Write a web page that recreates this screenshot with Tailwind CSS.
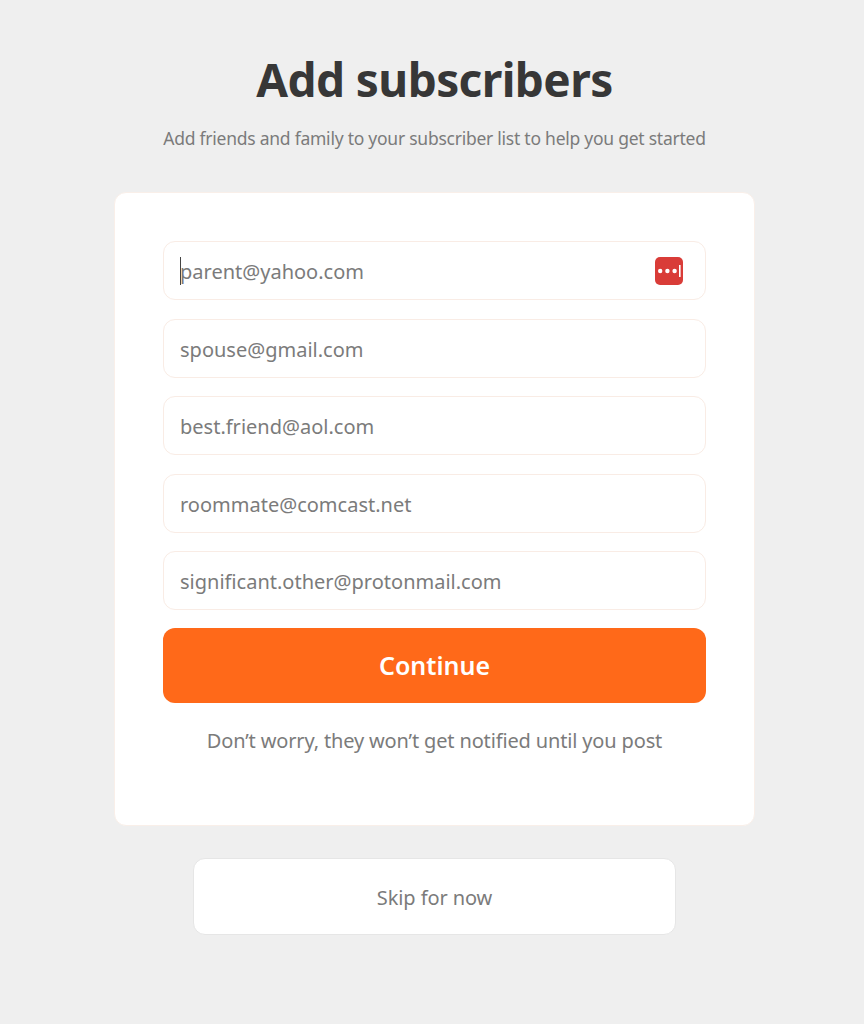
<!DOCTYPE html>
<html lang="en">
<head>
    <meta charset="UTF-8">
    <meta name="viewport" content="width=device-width, initial-scale=1.0">
    <title>Add subscribers</title>
    <script src="https://cdn.jsdelivr.net/npm/@tailwindcss/browser@4"></script>
</head>
<body class="bg-[#efefef] min-h-screen font-['Noto_Sans',sans-serif] text-[#7b7b7b]">
    <main class="w-[641px] ml-[114px] pt-[48px] flex flex-col items-center">
        <h1 class="text-[46px] leading-[62px] font-bold text-[#373737] tracking-[-0.6px]">Add subscribers</h1>
        <p class="mt-[16px] text-[17.5px] leading-[24px] tracking-[-0.25px] whitespace-nowrap">Add friends and family to your subscriber list to help you get started</p>

        <div class="mt-[42px] w-full h-[634px] bg-white rounded-[12px] border border-[#f9efe9] px-[48px] pt-[48px]">
            <form class="flex flex-col gap-[18.5px]">
                <div class="relative">
                    <input type="text" placeholder="parent@yahoo.com" class="w-full h-[59px] px-[16px] pt-[2px] bg-white rounded-[12px] border border-[#f9ece5] text-[20px] placeholder:text-[#7b7b7b] outline-none">
                    <span class="absolute left-[17px] top-[16px] w-px h-[28px] bg-[#444]"></span>
                    <svg class="absolute left-[491.5px] top-[16px] w-[28px] h-[28px]" viewBox="0 0 28 28">
                        <rect width="28" height="28" rx="5" fill="#d93c38"/>
                        <circle cx="5.2" cy="14" r="2.2" fill="#fff"/>
                        <circle cx="12.4" cy="14" r="2.2" fill="#fff"/>
                        <circle cx="19.6" cy="14" r="2.2" fill="#fff"/>
                        <rect x="24" y="8" width="1.6" height="12" fill="#fff"/>
                    </svg>
                </div>
                <input type="text" placeholder="spouse@gmail.com" class="w-full h-[59px] px-[16px] pt-[2px] bg-white rounded-[12px] border border-[#f9ece5] text-[20px] placeholder:text-[#7b7b7b] outline-none">
                <input type="text" placeholder="best.friend@aol.com" class="w-full h-[59px] px-[16px] pt-[2px] bg-white rounded-[12px] border border-[#f9ece5] text-[20px] placeholder:text-[#7b7b7b] outline-none">
                <input type="text" placeholder="roommate@comcast.net" class="w-full h-[59px] px-[16px] pt-[2px] bg-white rounded-[12px] border border-[#f9ece5] text-[20px] placeholder:text-[#7b7b7b] outline-none">
                <input type="text" placeholder="significant.other@protonmail.com" class="w-full h-[59px] px-[16px] pt-[2px] bg-white rounded-[12px] border border-[#f9ece5] text-[20px] placeholder:text-[#7b7b7b] outline-none">
                <button type="button" class="-mt-[1px] w-full h-[75px] pt-[2px] bg-[#ff6919] rounded-[12px] text-white text-[25px] font-semibold">Continue</button>
            </form>
            <p class="mt-[24px] text-center text-[20px] leading-[28px] tracking-[-0.15px]">Don’t worry, they won’t get notified until you post</p>
        </div>

        <button type="button" class="mt-[32px] w-[483px] h-[77px] pt-[2px] bg-white rounded-[12px] border border-[#e6e6e6] text-[20px] tracking-[-0.1px]">Skip for now</button>
    </main>
</body>
</html>
